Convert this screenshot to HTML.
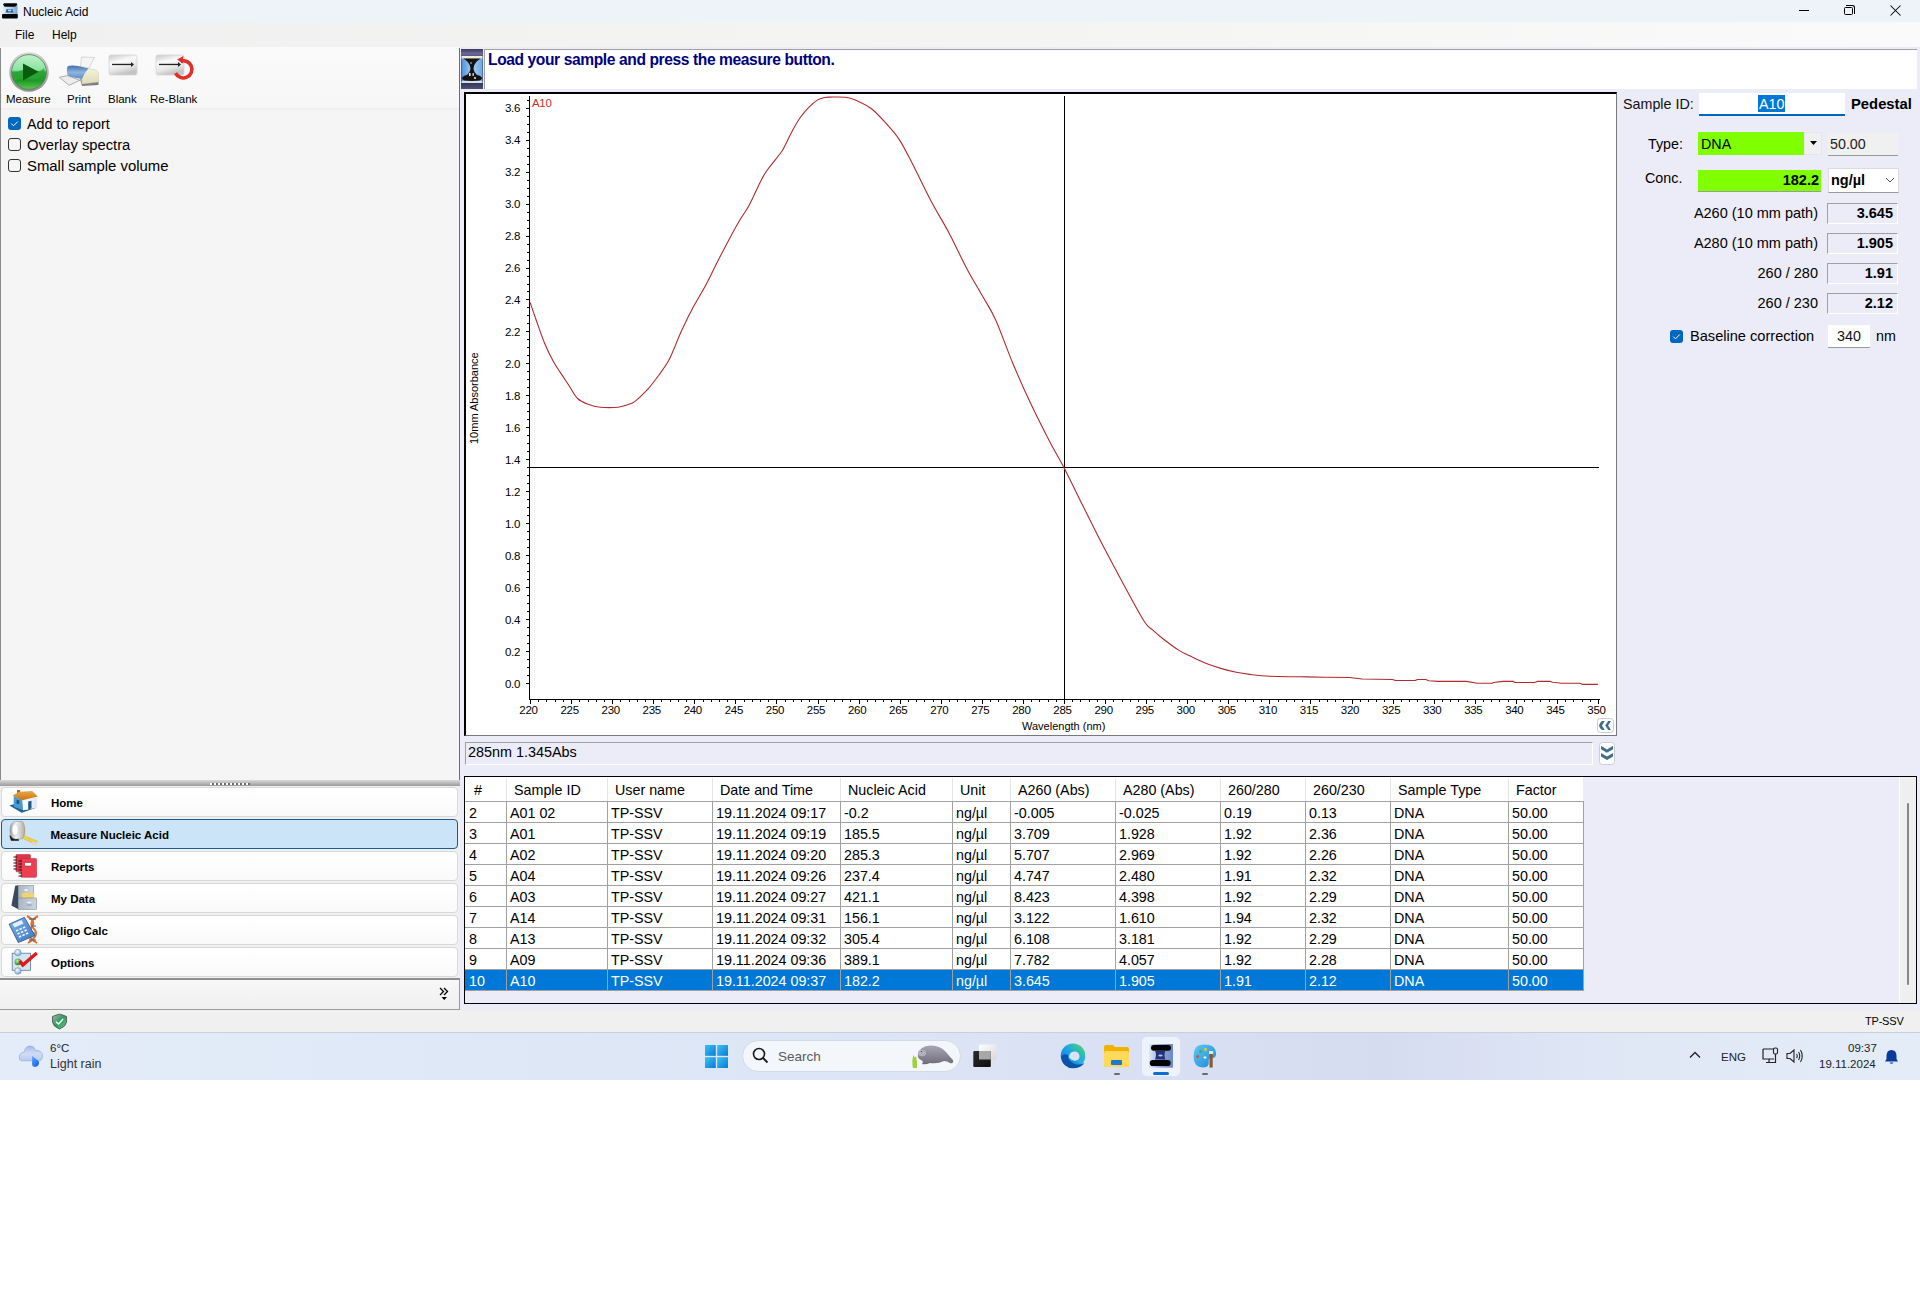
<!DOCTYPE html>
<html><head><meta charset="utf-8"><title>Nucleic Acid</title>
<style>
*{box-sizing:border-box}
html,body{margin:0;padding:0}
body{width:1920px;height:1312px;position:relative;overflow:hidden;background:#fff;font-family:"Liberation Sans",sans-serif;color:#000}
.a{position:absolute}
.t{position:absolute;white-space:nowrap;line-height:1}
.tl{position:absolute;font-size:11.5px;line-height:14px;color:#000;white-space:nowrap;letter-spacing:-0.3px}
.th{position:absolute;font-size:14.3px;line-height:16px;white-space:nowrap;color:#000}
.td{position:absolute;font-size:14.3px;line-height:16px;white-space:nowrap}
.nav{position:absolute;left:1px;width:457px;height:30px;border:1px solid #d9d9d9;border-radius:4px;background:linear-gradient(#fff,#fafafa)}
.nav .lbl{position:absolute;left:49px;top:8px;font-size:11.5px;font-weight:bold;line-height:14px;white-space:nowrap}
.nav svg{position:absolute;left:8px;top:1px}
.cb{position:absolute;width:13px;height:13px;border-radius:3px}
.cb.on{background:#0067c0}
.cb.off{border:1px solid #333;background:#f5f5f5}
.box{position:absolute;border-top:1px solid #a0a0a0;border-left:1px solid #a0a0a0;border-right:1px solid #fff;border-bottom:1px solid #fff;background:#ececf8}
.val{position:absolute;font-weight:bold;font-size:14.5px;line-height:16px;text-align:right;white-space:nowrap}
.lab{position:absolute;font-size:14.5px;line-height:16px;text-align:right;white-space:nowrap}
</style></head>
<body>
<!-- title bar -->
<div class="a" style="left:0;top:0;width:1920px;height:22px;background:#eef2f9"></div>
<svg class="a" style="left:0;top:0" width="24" height="22" viewBox="0 0 24 22">
  <defs><linearGradient id="ti" x1="0" y1="0" x2="1" y2="0"><stop offset="0" stop-color="#e4f2fc"/><stop offset="0.6" stop-color="#a9cdef"/><stop offset="1" stop-color="#7fa3c8"/></linearGradient></defs>
  <rect x="2.3" y="4.5" width="15.2" height="10.5" fill="url(#ti)"/>
  <path d="M3 4.6 Q3.5 3.2 5 3.2 L16.5 3.2 Q17.2 3.4 17 5 L15 6.8 L4.6 6.8 Z" fill="#050505"/>
  <path d="M5.2 12.5 L13.9 12.5 L12.6 11.3 L12.6 9.3 L6.3 9.3 L6.3 11.3 Z" fill="#1c4f88"/>
  <ellipse cx="9.6" cy="10.5" rx="2" ry="0.9" fill="#b8dcfa"/>
  <rect x="2" y="13.9" width="15.8" height="4.6" rx="1" fill="#050505"/>
</svg>
<div class="t" style="left:23px;top:6px;font-size:12px;color:#000">Nucleic Acid</div>
<!-- window controls -->
<div class="a" style="left:1799px;top:10px;width:10px;height:1px;background:#000"></div>
<div class="a" style="left:1844px;top:6.5px;width:8.5px;height:8.5px;border:1px solid #000;border-radius:1.5px"></div>
<div class="a" style="left:1846px;top:5px;width:8.5px;height:8.5px;border-top:1px solid #000;border-right:1px solid #000;border-radius:0 2.5px 0 0"></div>
<svg class="a" style="left:1890px;top:5px" width="11" height="11" viewBox="0 0 11 11"><path d="M0.5 0.5 L10.5 10.5 M10.5 0.5 L0.5 10.5" stroke="#000" stroke-width="1.05"/></svg>

<!-- menu bar -->
<div class="a" style="left:0;top:22px;width:1920px;height:25px;background:linear-gradient(90deg,#f0f0f0,#f4f4f3 50%,#fafafa)"></div>
<div class="t" style="left:15px;top:29px;font-size:12px">File</div>
<div class="t" style="left:52px;top:29px;font-size:12px">Help</div>

<!-- main area backgrounds -->
<div class="a" style="left:460px;top:47px;width:1460px;height:963px;background:#ececf8"></div>
<div class="a" style="left:0;top:47px;width:460px;height:963px;background:#f5f5f5"></div>
<!-- left toolbar -->
<div class="a" style="left:1px;top:47px;width:458px;height:62px;background:linear-gradient(#fafafa,#f7f7f7)"></div>
<div class="a" style="left:1px;top:108px;width:458px;height:2px;background:linear-gradient(#ececec,#f3f3f3)"></div>
<div class="a" style="left:0;top:48px;width:1px;height:732px;background:#8a8a8a"></div>
<div class="a" style="left:459px;top:48px;width:1px;height:732px;background:#6e6e6e"></div>

<!-- Measure icon -->
<svg class="a" style="left:8px;top:51px" width="42" height="42" viewBox="0 0 42 42">
  <defs>
    <linearGradient id="gm" x1="0" y1="0" x2="0" y2="1"><stop offset="0" stop-color="#bff2cc"/><stop offset="0.45" stop-color="#8be3a0"/><stop offset="0.5" stop-color="#2ea83a"/><stop offset="0.75" stop-color="#1d9a26"/><stop offset="1" stop-color="#62c455"/></linearGradient>
    <linearGradient id="gr" x1="0" y1="0" x2="0" y2="1"><stop offset="0" stop-color="#d6d6d6"/><stop offset="1" stop-color="#8e8e8e"/></linearGradient>
  </defs>
  <circle cx="21" cy="21" r="19.8" fill="url(#gr)"/>
  <circle cx="21" cy="21" r="17.4" fill="url(#gm)" stroke="#4f7f58" stroke-width="0.8"/>
  <path d="M6 24 Q12 17 21 20 Q30 23 36 17 L37 22 Q30 30 21 28 Q12 26 6 30 Z" fill="#2aa435" opacity="0.8"/>
  <polygon points="15,12.5 30.5,20.8 15,29.5" fill="#0a5a10"/>
</svg>
<div class="t" style="left:6px;top:94px;font-size:11.5px">Measure</div>
<!-- Print icon -->
<svg class="a" style="left:58px;top:56px" width="42" height="32" viewBox="0 0 42 32">
  <defs>
    <linearGradient id="pb" x1="0" y1="0" x2="0" y2="1"><stop offset="0" stop-color="#3f6ea8"/><stop offset="0.5" stop-color="#8fb4e0"/><stop offset="1" stop-color="#5d8cc4"/></linearGradient>
    <linearGradient id="pc" x1="0" y1="0" x2="0" y2="1"><stop offset="0" stop-color="#f6f3dc"/><stop offset="1" stop-color="#dedab8"/></linearGradient>
  </defs>
  <polygon points="23.5,1 36.5,1.5 31,12 22.5,10.5" fill="#f4f4f4" stroke="#c4c4c4" stroke-width="0.6"/>
  <polygon points="22,23 40.5,25 40.5,29 24,30" fill="#7d7d7d"/>
  <path d="M29 12.5 L38 14 Q41 16 40.5 20 L40.5 26 L24 28 L23.5 22.5 Z" fill="url(#pc)" stroke="#c9c5a3" stroke-width="0.5"/>
  <path d="M9.5 10.5 Q12 9 20 10 L30.5 12.5 Q27 16 24 23 L10 20.5 Q8 15 9.5 10.5 Z" fill="url(#pb)"/>
  <polygon points="1.4,21.3 9.5,19.6 22,24.3 11,29.3" fill="#ececec" stroke="#8f8f8f" stroke-width="0.7"/>
</svg>
<div class="t" style="left:67px;top:94px;font-size:11.5px">Print</div>
<!-- Blank icon -->
<svg class="a" style="left:108px;top:54px" width="30" height="23" viewBox="0 0 30 23">
  <defs><linearGradient id="gb" x1="0" y1="0" x2="0.35" y2="1"><stop offset="0" stop-color="#c8c8c8"/><stop offset="0.4" stop-color="#fafafa"/><stop offset="0.75" stop-color="#e6e6e6"/><stop offset="1" stop-color="#c4c4c4"/></linearGradient></defs>
  <rect x="1" y="1" width="28" height="20" rx="2" fill="url(#gb)" stroke="#d5d5d5" stroke-width="0.8"/>
  <rect x="4" y="9.8" width="20" height="1.3" fill="#222"/>
  <polygon points="23,8 26,10.45 23,12.9" fill="#222"/>
</svg>
<div class="t" style="left:108px;top:94px;font-size:11.5px">Blank</div>
<!-- Re-Blank icon -->
<svg class="a" style="left:155px;top:54px" width="42" height="32" viewBox="0 0 42 32">
  <rect x="1" y="1" width="28" height="20" rx="2" fill="url(#gb)" stroke="#d5d5d5" stroke-width="0.8"/>
  <rect x="4" y="9.8" width="20" height="1.3" fill="#222"/>
  <polygon points="23,8 26,10.45 23,12.9" fill="#222"/>
  <path d="M25.5 7.2 A8.6 8.6 0 1 1 20.6 19.1" fill="none" stroke="#e0302a" stroke-width="3.6"/>
  <polygon points="22.2,5.6 28.4,2 27.6,9.6" fill="#e0302a"/>
</svg>
<div class="t" style="left:150px;top:94px;font-size:11.5px">Re-Blank</div>

<!-- checkboxes -->
<div class="cb on" style="left:8px;top:117px"></div>
<svg class="a" style="left:8px;top:117px" width="13" height="13" viewBox="0 0 13 13"><path d="M3.3 6.6 L5.5 8.8 L9.8 4.5" fill="none" stroke="#fff" stroke-width="1"/></svg>
<div class="t" style="left:27px;top:117px;font-size:14.3px">Add to report</div>
<div class="cb off" style="left:8px;top:138px"></div>
<div class="t" style="left:27px;top:138px;font-size:14.75px">Overlay spectra</div>
<div class="cb off" style="left:8px;top:159px"></div>
<div class="t" style="left:27px;top:159px;font-size:14.9px">Small sample volume</div>

<!-- splitter -->
<div class="a" style="left:0;top:780px;width:460px;height:6px;background:linear-gradient(#dadada,#9a9a9a)"></div>
<div class="a" style="left:210px;top:782.5px;width:40px;height:2px;background:repeating-linear-gradient(90deg,#fff 0 2px,#6a6a6a 2px 4px)"></div>
<div class="a" style="left:0;top:786px;width:460px;height:224px;background:#f0f0f0"></div>

<!-- nav buttons -->
<div class="nav" style="top:787px"><div class="lbl">Home</div></div>
<div class="nav" style="top:819px;background:#cce4f7;border-color:#1d5b8d;border-width:1.5px"><div class="lbl" style="left:48.5px;top:7.5px">Measure Nucleic Acid</div></div>
<div class="nav" style="top:851px"><div class="lbl">Reports</div></div>
<div class="nav" style="top:883px"><div class="lbl">My Data</div></div>
<div class="nav" style="top:915px"><div class="lbl">Oligo Calc</div></div>
<div class="nav" style="top:947px"><div class="lbl">Options</div></div>
<svg class="a" style="left:0;top:785px" width="45" height="195" viewBox="0 785 45 195">
  <defs>
    <linearGradient id="roof" x1="0" y1="0" x2="0" y2="1"><stop offset="0" stop-color="#e9a84a"/><stop offset="1" stop-color="#c87414"/></linearGradient>
    <linearGradient id="wall" x1="0" y1="0" x2="1" y2="0"><stop offset="0" stop-color="#ffffff"/><stop offset="1" stop-color="#dfe8f0"/></linearGradient>
    <linearGradient id="ring" x1="0" y1="0" x2="1" y2="0"><stop offset="0" stop-color="#9a9a9a"/><stop offset="0.4" stop-color="#f4f4f4"/><stop offset="1" stop-color="#b0b0b0"/></linearGradient>
    <linearGradient id="cab" x1="0" y1="0" x2="1" y2="0"><stop offset="0" stop-color="#aab6c4"/><stop offset="1" stop-color="#cdd6e0"/></linearGradient>
    <linearGradient id="calc" x1="0" y1="0" x2="1" y2="1"><stop offset="0" stop-color="#7fb2e8"/><stop offset="1" stop-color="#3c78c4"/></linearGradient>
    <radialGradient id="ball" cx="40%" cy="35%" r="60%"><stop offset="0" stop-color="#ffffff"/><stop offset="1" stop-color="#7fb0d8"/></radialGradient>
    <radialGradient id="gball" cx="40%" cy="35%" r="60%"><stop offset="0" stop-color="#b8f0a8"/><stop offset="1" stop-color="#1f8f2a"/></radialGradient>
  </defs>
  <!-- home -->
  <polygon points="9.4,805.6 13.7,804.2 23.2,810.3 36.9,807.4 21.7,812.8" fill="#1f5f8a"/>
  <polygon points="13.7,795.9 22.4,799.8 23.2,810.3 13.7,806.7" fill="#4a9ad0"/>
  <polygon points="22.4,799.8 36.9,797 36.9,807.4 23.2,810.3" fill="url(#wall)"/>
  <rect x="16.6" y="800.2" width="2.6" height="3.6" fill="#1d4f78"/>
  <polygon points="28.2,801.5 31.5,800.8 31.5,808.6 28.2,809.3" fill="#1d5a86"/>
  <rect x="17" y="790" width="3.2" height="4" fill="#b86a1a"/>
  <polygon points="12.6,795.4 19.5,791.7 32.2,791 37.8,796.6 22.4,800.2" fill="url(#roof)"/>
  <!-- measure tape -->
  <polygon points="18.8,836.6 22,834.8 37.6,841.2 35,844.2" fill="#f0d048" stroke="#c9a82a" stroke-width="0.4"/>
  <polygon points="31.8,842 37.8,842.4 37.2,845.8 31.6,845" fill="#d8d8d8"/>
  <rect x="21" y="826" width="4.3" height="9.5" rx="1" fill="#f2c840"/>
  <polygon points="9.4,835.6 18,835.6 19,840.7 11,840.7" fill="#161616"/>
  <path d="M16 821.5 L22 821.5 Q24.5 822 24.5 830 Q24.5 838.5 21 839 L15 839 Q10 838.5 10 830.3 Q10 821.5 16 821.5 Z" fill="url(#ring)" stroke="#8a8a8a" stroke-width="0.5"/>
  <ellipse cx="15.2" cy="829.8" rx="3.1" ry="6" fill="#fdfdfd" stroke="#c8c8c8" stroke-width="0.6"/>
  <!-- reports -->
  <rect x="15.9" y="854.5" width="14.5" height="17.3" rx="1" fill="#e23446" stroke="#a8202e" stroke-width="0.5"/>
  <rect x="21" y="858.4" width="15.5" height="18.9" rx="1" fill="#ef3d52" stroke="#a8202e" stroke-width="0.5"/>
  <rect x="24.6" y="862.4" width="6.9" height="3.6" rx="0.8" fill="#fff" stroke="#7a1a24" stroke-width="0.5"/>
  <path d="M13.5 857 h3.5 M13.5 860 h3.5 M13.5 863 h3.5 M13.5 866 h3.5 M13.5 869 h3.5 M18.5 861 h3.5 M18.5 864 h3.5 M18.5 867 h3.5 M18.5 870 h3.5 M18.5 873 h3.5 M18.5 876 h3.5" stroke="#1a1a1a" stroke-width="1"/>
  <!-- my data -->
  <polygon points="11.4,905.5 15.2,885.7 18.3,885.3 18.3,909.3" fill="#3a4a5a"/>
  <rect x="18.3" y="885.3" width="15.2" height="13" fill="url(#cab)" stroke="#6d7a88" stroke-width="0.5"/>
  <rect x="24.4" y="889.3" width="3.4" height="1.6" fill="#f4f6f8"/>
  <polygon points="22.1,893.3 26,892.5 34.3,893.5 34.3,898 22.1,898" fill="#f2d46a"/>
  <rect x="18.3" y="898" width="18.3" height="11.3" fill="url(#cab)" stroke="#6d7a88" stroke-width="0.5"/>
  <rect x="27.4" y="901.8" width="3.8" height="1.4" fill="#f4f6f8"/>
  <rect x="27" y="904.5" width="4.6" height="1" fill="#8a96a4"/>
  <!-- oligo calc -->
  <path d="M27 916 Q38 922 30 929 Q24 935 37 943 M38 916 Q27 922 34 929 Q40 935 28 943" fill="none" stroke="#e8702a" stroke-width="2"/>
  <path d="M29 919 h7 M31 926 h5 M30 933 h5 M29 940 h7" stroke="#2a5d99" stroke-width="1.2"/>
  <polygon points="9.1,924.2 24.4,917.3 35,935.6 18.3,942.5" fill="url(#calc)" stroke="#24528e" stroke-width="0.8"/>
  <polygon points="12.5,924 21.5,920 23.5,923.5 14.5,927.5" fill="#e6f0fa"/>
  <path d="M16 931 l2.2 -1 M19.5 929.5 l2.2 -1 M23 928 l2.2 -1 M17.5 934 l2.2 -1 M21 932.5 l2.2 -1 M24.5 931 l2.2 -1 M19 937 l2.2 -1 M22.5 935.5 l2.2 -1 M26 934 l2.2 -1" stroke="#f4f8fc" stroke-width="1.5"/>
  <!-- options -->
  <rect x="12.2" y="953.2" width="18.3" height="17.1" fill="#d4e4f2" stroke="#5a7a9a" stroke-width="0.8"/>
  <circle cx="17.9" cy="952.6" r="3.3" fill="url(#ball)" stroke="#6a8aa8" stroke-width="0.5"/>
  <circle cx="17.9" cy="961.9" r="3.3" fill="url(#gball)"/>
  <circle cx="17.9" cy="971" r="3.3" fill="url(#ball)" stroke="#6a8aa8" stroke-width="0.5"/>
  <path d="M19.8 961 L22.8 965 L36.8 953" fill="none" stroke="#e01818" stroke-width="3.4" stroke-linejoin="miter"/>
</svg>
<!-- bottom nav bar -->
<div class="a" style="left:0;top:978px;width:460px;height:32px;background:linear-gradient(#f8f8f8,#efefef);border-top:2px solid #8f8f8f;border-right:1px solid #9a9a9a;border-bottom:1px solid #9a9a9a"></div>
<svg class="a" style="left:439px;top:987px" width="11" height="15" viewBox="0 0 11 15"><path d="M1 1 L4.5 4.5 L1 8 M5 1 L8.5 4.5 L5 8" fill="none" stroke="#000" stroke-width="1.3"/><polygon points="2.5,10 8,10 5.25,13" fill="#000"/></svg>

<!-- right header -->
<svg class="a" style="left:461px;top:49px" width="22" height="40" viewBox="0 0 22 40">
  <defs>
    <linearGradient id="hb" x1="0" y1="0" x2="0" y2="1"><stop offset="0" stop-color="#3a3a5e"/><stop offset="0.12" stop-color="#6b6a9a"/><stop offset="0.2" stop-color="#4a4a70"/><stop offset="0.8" stop-color="#2c2c48"/><stop offset="1" stop-color="#50507a"/></linearGradient>
    <linearGradient id="hs" x1="0" y1="0" x2="1" y2="0"><stop offset="0" stop-color="#4f8fd8"/><stop offset="0.5" stop-color="#a8d0f4"/><stop offset="1" stop-color="#6aa8e6"/></linearGradient>
  </defs>
  <rect x="0" y="0" width="22" height="40" fill="url(#hb)"/>
  <rect x="0.5" y="9" width="21" height="23" fill="url(#hs)"/>
  <rect x="0.5" y="7" width="21" height="2.6" fill="#efe9d6"/>
  <path d="M2 9.6 L20 9.6 Q15 12 13 17 L12.5 20 L13.5 23 Q15 25 16 26 Q21 27 21 29.5 Q21 32 11 32 Q1 32 1 29.5 Q1 27 6 26 Q7 25 8.5 23 L9.5 20 L9 17 Q7 12 2 9.6 Z" fill="#141210"/>
  <rect x="8" y="24" width="1.6" height="3" fill="#e8e8e8"/><rect x="11.5" y="24" width="1.4" height="3" fill="#cfcfcf"/>
  <circle cx="14" cy="29" r="1" fill="#f4f0e0"/><circle cx="10" cy="14" r="0.8" fill="#e0e0e0"/>
  <rect x="0.5" y="32" width="21" height="2" fill="#d8dde6"/>
</svg>
<div class="a" style="left:484px;top:49px;width:1433px;height:40px;background:#fff;border-top:1px solid #a0a0a0;border-left:1px solid #a0a0a0"></div>
<div class="t" style="left:488px;top:51.5px;font-size:15.6px;letter-spacing:-0.4px;font-weight:bold;color:#000080">Load your sample and press the measure button.</div>

<!-- chart box -->
<div class="a" style="left:464px;top:92px;width:1153px;height:644px;background:#fff;border-top:2px solid #000;border-left:2px solid #000;border-right:1px solid #76787e;border-bottom:1px solid #76787e"></div>
<svg width="1153" height="645" viewBox="464 92 1153 645" style="position:absolute;left:464px;top:92px" shape-rendering="crispEdges">
<rect x="529" y="96" width="1" height="604" fill="#000"/>
<rect x="529" y="699" width="1071" height="1" fill="#000"/>
<rect x="526" y="683" width="3" height="1" fill="#000"/>
<rect x="527" y="675" width="2" height="1" fill="#000"/>
<rect x="527" y="667" width="2" height="1" fill="#000"/>
<rect x="527" y="659" width="2" height="1" fill="#000"/>
<rect x="526" y="651" width="3" height="1" fill="#000"/>
<rect x="527" y="643" width="2" height="1" fill="#000"/>
<rect x="527" y="635" width="2" height="1" fill="#000"/>
<rect x="527" y="627" width="2" height="1" fill="#000"/>
<rect x="526" y="619" width="3" height="1" fill="#000"/>
<rect x="527" y="611" width="2" height="1" fill="#000"/>
<rect x="527" y="603" width="2" height="1" fill="#000"/>
<rect x="527" y="595" width="2" height="1" fill="#000"/>
<rect x="526" y="587" width="3" height="1" fill="#000"/>
<rect x="527" y="579" width="2" height="1" fill="#000"/>
<rect x="527" y="571" width="2" height="1" fill="#000"/>
<rect x="527" y="563" width="2" height="1" fill="#000"/>
<rect x="526" y="555" width="3" height="1" fill="#000"/>
<rect x="527" y="547" width="2" height="1" fill="#000"/>
<rect x="527" y="539" width="2" height="1" fill="#000"/>
<rect x="527" y="531" width="2" height="1" fill="#000"/>
<rect x="526" y="523" width="3" height="1" fill="#000"/>
<rect x="527" y="515" width="2" height="1" fill="#000"/>
<rect x="527" y="507" width="2" height="1" fill="#000"/>
<rect x="527" y="499" width="2" height="1" fill="#000"/>
<rect x="526" y="491" width="3" height="1" fill="#000"/>
<rect x="527" y="483" width="2" height="1" fill="#000"/>
<rect x="527" y="475" width="2" height="1" fill="#000"/>
<rect x="527" y="467" width="2" height="1" fill="#000"/>
<rect x="526" y="459" width="3" height="1" fill="#000"/>
<rect x="527" y="451" width="2" height="1" fill="#000"/>
<rect x="527" y="443" width="2" height="1" fill="#000"/>
<rect x="527" y="435" width="2" height="1" fill="#000"/>
<rect x="526" y="427" width="3" height="1" fill="#000"/>
<rect x="527" y="419" width="2" height="1" fill="#000"/>
<rect x="527" y="411" width="2" height="1" fill="#000"/>
<rect x="527" y="403" width="2" height="1" fill="#000"/>
<rect x="526" y="395" width="3" height="1" fill="#000"/>
<rect x="527" y="387" width="2" height="1" fill="#000"/>
<rect x="527" y="379" width="2" height="1" fill="#000"/>
<rect x="527" y="371" width="2" height="1" fill="#000"/>
<rect x="526" y="363" width="3" height="1" fill="#000"/>
<rect x="527" y="355" width="2" height="1" fill="#000"/>
<rect x="527" y="347" width="2" height="1" fill="#000"/>
<rect x="527" y="339" width="2" height="1" fill="#000"/>
<rect x="526" y="331" width="3" height="1" fill="#000"/>
<rect x="527" y="323" width="2" height="1" fill="#000"/>
<rect x="527" y="315" width="2" height="1" fill="#000"/>
<rect x="527" y="307" width="2" height="1" fill="#000"/>
<rect x="526" y="299" width="3" height="1" fill="#000"/>
<rect x="527" y="291" width="2" height="1" fill="#000"/>
<rect x="527" y="284" width="2" height="1" fill="#000"/>
<rect x="527" y="276" width="2" height="1" fill="#000"/>
<rect x="526" y="268" width="3" height="1" fill="#000"/>
<rect x="527" y="260" width="2" height="1" fill="#000"/>
<rect x="527" y="252" width="2" height="1" fill="#000"/>
<rect x="527" y="244" width="2" height="1" fill="#000"/>
<rect x="526" y="236" width="3" height="1" fill="#000"/>
<rect x="527" y="228" width="2" height="1" fill="#000"/>
<rect x="527" y="220" width="2" height="1" fill="#000"/>
<rect x="527" y="212" width="2" height="1" fill="#000"/>
<rect x="526" y="204" width="3" height="1" fill="#000"/>
<rect x="527" y="196" width="2" height="1" fill="#000"/>
<rect x="527" y="188" width="2" height="1" fill="#000"/>
<rect x="527" y="180" width="2" height="1" fill="#000"/>
<rect x="526" y="172" width="3" height="1" fill="#000"/>
<rect x="527" y="164" width="2" height="1" fill="#000"/>
<rect x="527" y="156" width="2" height="1" fill="#000"/>
<rect x="527" y="148" width="2" height="1" fill="#000"/>
<rect x="526" y="140" width="3" height="1" fill="#000"/>
<rect x="527" y="132" width="2" height="1" fill="#000"/>
<rect x="527" y="124" width="2" height="1" fill="#000"/>
<rect x="527" y="116" width="2" height="1" fill="#000"/>
<rect x="526" y="108" width="3" height="1" fill="#000"/>
<rect x="527" y="100" width="2" height="1" fill="#000"/>
<rect x="530" y="700" width="1" height="4" fill="#000"/>
<rect x="538" y="700" width="1" height="2" fill="#000"/>
<rect x="546" y="700" width="1" height="2" fill="#000"/>
<rect x="555" y="700" width="1" height="2" fill="#000"/>
<rect x="563" y="700" width="1" height="2" fill="#000"/>
<rect x="571" y="700" width="1" height="4" fill="#000"/>
<rect x="579" y="700" width="1" height="2" fill="#000"/>
<rect x="588" y="700" width="1" height="2" fill="#000"/>
<rect x="596" y="700" width="1" height="2" fill="#000"/>
<rect x="604" y="700" width="1" height="2" fill="#000"/>
<rect x="612" y="700" width="1" height="4" fill="#000"/>
<rect x="620" y="700" width="1" height="2" fill="#000"/>
<rect x="629" y="700" width="1" height="2" fill="#000"/>
<rect x="637" y="700" width="1" height="2" fill="#000"/>
<rect x="645" y="700" width="1" height="2" fill="#000"/>
<rect x="653" y="700" width="1" height="4" fill="#000"/>
<rect x="661" y="700" width="1" height="2" fill="#000"/>
<rect x="670" y="700" width="1" height="2" fill="#000"/>
<rect x="678" y="700" width="1" height="2" fill="#000"/>
<rect x="686" y="700" width="1" height="2" fill="#000"/>
<rect x="694" y="700" width="1" height="4" fill="#000"/>
<rect x="703" y="700" width="1" height="2" fill="#000"/>
<rect x="711" y="700" width="1" height="2" fill="#000"/>
<rect x="719" y="700" width="1" height="2" fill="#000"/>
<rect x="727" y="700" width="1" height="2" fill="#000"/>
<rect x="735" y="700" width="1" height="4" fill="#000"/>
<rect x="744" y="700" width="1" height="2" fill="#000"/>
<rect x="752" y="700" width="1" height="2" fill="#000"/>
<rect x="760" y="700" width="1" height="2" fill="#000"/>
<rect x="768" y="700" width="1" height="2" fill="#000"/>
<rect x="776" y="700" width="1" height="4" fill="#000"/>
<rect x="785" y="700" width="1" height="2" fill="#000"/>
<rect x="793" y="700" width="1" height="2" fill="#000"/>
<rect x="801" y="700" width="1" height="2" fill="#000"/>
<rect x="809" y="700" width="1" height="2" fill="#000"/>
<rect x="818" y="700" width="1" height="4" fill="#000"/>
<rect x="826" y="700" width="1" height="2" fill="#000"/>
<rect x="834" y="700" width="1" height="2" fill="#000"/>
<rect x="842" y="700" width="1" height="2" fill="#000"/>
<rect x="850" y="700" width="1" height="2" fill="#000"/>
<rect x="859" y="700" width="1" height="4" fill="#000"/>
<rect x="867" y="700" width="1" height="2" fill="#000"/>
<rect x="875" y="700" width="1" height="2" fill="#000"/>
<rect x="883" y="700" width="1" height="2" fill="#000"/>
<rect x="891" y="700" width="1" height="2" fill="#000"/>
<rect x="900" y="700" width="1" height="4" fill="#000"/>
<rect x="908" y="700" width="1" height="2" fill="#000"/>
<rect x="916" y="700" width="1" height="2" fill="#000"/>
<rect x="924" y="700" width="1" height="2" fill="#000"/>
<rect x="933" y="700" width="1" height="2" fill="#000"/>
<rect x="941" y="700" width="1" height="4" fill="#000"/>
<rect x="949" y="700" width="1" height="2" fill="#000"/>
<rect x="957" y="700" width="1" height="2" fill="#000"/>
<rect x="965" y="700" width="1" height="2" fill="#000"/>
<rect x="974" y="700" width="1" height="2" fill="#000"/>
<rect x="982" y="700" width="1" height="4" fill="#000"/>
<rect x="990" y="700" width="1" height="2" fill="#000"/>
<rect x="998" y="700" width="1" height="2" fill="#000"/>
<rect x="1006" y="700" width="1" height="2" fill="#000"/>
<rect x="1015" y="700" width="1" height="2" fill="#000"/>
<rect x="1023" y="700" width="1" height="4" fill="#000"/>
<rect x="1031" y="700" width="1" height="2" fill="#000"/>
<rect x="1039" y="700" width="1" height="2" fill="#000"/>
<rect x="1048" y="700" width="1" height="2" fill="#000"/>
<rect x="1056" y="700" width="1" height="2" fill="#000"/>
<rect x="1064" y="700" width="1" height="4" fill="#000"/>
<rect x="1072" y="700" width="1" height="2" fill="#000"/>
<rect x="1080" y="700" width="1" height="2" fill="#000"/>
<rect x="1089" y="700" width="1" height="2" fill="#000"/>
<rect x="1097" y="700" width="1" height="2" fill="#000"/>
<rect x="1105" y="700" width="1" height="4" fill="#000"/>
<rect x="1113" y="700" width="1" height="2" fill="#000"/>
<rect x="1122" y="700" width="1" height="2" fill="#000"/>
<rect x="1130" y="700" width="1" height="2" fill="#000"/>
<rect x="1138" y="700" width="1" height="2" fill="#000"/>
<rect x="1146" y="700" width="1" height="4" fill="#000"/>
<rect x="1154" y="700" width="1" height="2" fill="#000"/>
<rect x="1163" y="700" width="1" height="2" fill="#000"/>
<rect x="1171" y="700" width="1" height="2" fill="#000"/>
<rect x="1179" y="700" width="1" height="2" fill="#000"/>
<rect x="1187" y="700" width="1" height="4" fill="#000"/>
<rect x="1195" y="700" width="1" height="2" fill="#000"/>
<rect x="1204" y="700" width="1" height="2" fill="#000"/>
<rect x="1212" y="700" width="1" height="2" fill="#000"/>
<rect x="1220" y="700" width="1" height="2" fill="#000"/>
<rect x="1228" y="700" width="1" height="4" fill="#000"/>
<rect x="1237" y="700" width="1" height="2" fill="#000"/>
<rect x="1245" y="700" width="1" height="2" fill="#000"/>
<rect x="1253" y="700" width="1" height="2" fill="#000"/>
<rect x="1261" y="700" width="1" height="2" fill="#000"/>
<rect x="1269" y="700" width="1" height="4" fill="#000"/>
<rect x="1278" y="700" width="1" height="2" fill="#000"/>
<rect x="1286" y="700" width="1" height="2" fill="#000"/>
<rect x="1294" y="700" width="1" height="2" fill="#000"/>
<rect x="1302" y="700" width="1" height="2" fill="#000"/>
<rect x="1310" y="700" width="1" height="4" fill="#000"/>
<rect x="1319" y="700" width="1" height="2" fill="#000"/>
<rect x="1327" y="700" width="1" height="2" fill="#000"/>
<rect x="1335" y="700" width="1" height="2" fill="#000"/>
<rect x="1343" y="700" width="1" height="2" fill="#000"/>
<rect x="1352" y="700" width="1" height="4" fill="#000"/>
<rect x="1360" y="700" width="1" height="2" fill="#000"/>
<rect x="1368" y="700" width="1" height="2" fill="#000"/>
<rect x="1376" y="700" width="1" height="2" fill="#000"/>
<rect x="1384" y="700" width="1" height="2" fill="#000"/>
<rect x="1393" y="700" width="1" height="4" fill="#000"/>
<rect x="1401" y="700" width="1" height="2" fill="#000"/>
<rect x="1409" y="700" width="1" height="2" fill="#000"/>
<rect x="1417" y="700" width="1" height="2" fill="#000"/>
<rect x="1425" y="700" width="1" height="2" fill="#000"/>
<rect x="1434" y="700" width="1" height="4" fill="#000"/>
<rect x="1442" y="700" width="1" height="2" fill="#000"/>
<rect x="1450" y="700" width="1" height="2" fill="#000"/>
<rect x="1458" y="700" width="1" height="2" fill="#000"/>
<rect x="1467" y="700" width="1" height="2" fill="#000"/>
<rect x="1475" y="700" width="1" height="4" fill="#000"/>
<rect x="1483" y="700" width="1" height="2" fill="#000"/>
<rect x="1491" y="700" width="1" height="2" fill="#000"/>
<rect x="1499" y="700" width="1" height="2" fill="#000"/>
<rect x="1508" y="700" width="1" height="2" fill="#000"/>
<rect x="1516" y="700" width="1" height="4" fill="#000"/>
<rect x="1524" y="700" width="1" height="2" fill="#000"/>
<rect x="1532" y="700" width="1" height="2" fill="#000"/>
<rect x="1540" y="700" width="1" height="2" fill="#000"/>
<rect x="1549" y="700" width="1" height="2" fill="#000"/>
<rect x="1557" y="700" width="1" height="4" fill="#000"/>
<rect x="1565" y="700" width="1" height="2" fill="#000"/>
<rect x="1573" y="700" width="1" height="2" fill="#000"/>
<rect x="1582" y="700" width="1" height="2" fill="#000"/>
<rect x="1590" y="700" width="1" height="2" fill="#000"/>
<rect x="1598" y="700" width="1" height="4" fill="#000"/>
</svg>
<svg width="1153" height="645" viewBox="464 92 1153 645" style="position:absolute;left:464px;top:92px">
<rect x="1064" y="96" width="1" height="603" fill="#000"/>
<rect x="530" y="467" width="1069" height="1" fill="#000"/>
<path d="M530.10 302.40 C531.08 305.25 533.60 312.73 536.00 319.50 C538.40 326.27 541.65 336.07 544.50 343.00 C547.35 349.93 550.42 356.12 553.10 361.10 C555.78 366.08 557.93 368.80 560.60 372.90 C563.27 377.00 566.27 381.43 569.10 385.70 C571.93 389.97 574.40 395.40 577.60 398.50 C580.80 401.60 584.55 402.85 588.30 404.30 C592.05 405.75 595.12 406.72 600.10 407.20 C605.08 407.68 613.40 407.68 618.20 407.20 C623.00 406.72 626.05 405.32 628.90 404.30 C631.75 403.28 632.10 403.67 635.30 401.10 C638.50 398.53 644.02 393.43 648.10 388.90 C652.18 384.37 656.42 378.53 659.80 373.90 C663.18 369.27 666.03 365.30 668.40 361.10 C670.77 356.90 671.75 353.90 674.00 348.70 C676.25 343.50 678.60 337.00 681.90 329.90 C685.20 322.80 689.83 313.53 693.80 306.10 C697.77 298.67 701.73 292.73 705.70 285.30 C709.67 277.87 713.63 269.27 717.60 261.50 C721.57 253.73 725.87 245.48 729.50 238.70 C733.13 231.92 736.10 226.42 739.40 220.80 C742.70 215.18 745.83 211.43 749.30 205.00 C752.77 198.57 757.23 187.98 760.20 182.20 C763.17 176.42 763.63 175.25 767.10 170.30 C770.57 165.35 778.02 156.63 781.00 152.50 C783.98 148.37 783.02 149.30 785.00 145.50 C786.98 141.70 790.27 134.48 792.90 129.70 C795.53 124.92 798.15 120.52 800.80 116.80 C803.45 113.08 805.98 110.22 808.80 107.40 C811.62 104.58 815.07 101.55 817.70 99.90 C820.33 98.25 822.55 97.97 824.60 97.50 C826.65 97.03 826.30 97.10 830.00 97.10 C833.70 97.10 841.85 96.70 846.80 97.50 C851.75 98.30 855.58 100.02 859.70 101.90 C863.82 103.78 867.22 105.33 871.50 108.80 C875.78 112.27 880.77 117.57 885.40 122.70 C890.03 127.83 894.67 132.50 899.30 139.60 C903.93 146.70 907.92 155.07 913.20 165.30 C918.48 175.53 925.05 189.77 931.00 201.00 C936.95 212.23 942.95 221.47 948.90 232.70 C954.85 243.93 961.08 257.82 966.70 268.40 C972.32 278.98 977.77 287.60 982.60 296.20 C987.43 304.80 990.65 308.78 995.70 320.00 C1000.75 331.22 1006.98 349.40 1012.90 363.50 C1018.82 377.60 1025.10 391.65 1031.20 404.60 C1037.30 417.55 1043.98 430.60 1049.50 441.20 C1055.02 451.80 1058.97 457.90 1064.30 468.20 C1069.63 478.50 1075.58 491.10 1081.50 503.00 C1087.42 514.90 1093.32 527.02 1099.80 539.60 C1106.28 552.18 1113.12 565.07 1120.40 578.50 C1127.68 591.93 1138.08 611.60 1143.50 620.20 C1148.92 628.80 1149.60 626.97 1152.90 630.10 C1156.20 633.23 1158.95 635.62 1163.30 639.00 C1167.65 642.38 1174.48 647.55 1179.00 650.40 C1183.52 653.25 1186.07 654.02 1190.40 656.10 C1194.73 658.18 1199.78 660.82 1205.00 662.90 C1210.22 664.98 1216.48 667.03 1221.70 668.60 C1226.92 670.17 1231.62 671.33 1236.30 672.30 C1240.98 673.27 1244.25 673.73 1249.80 674.40 C1255.35 675.07 1261.23 675.90 1269.60 676.30 C1277.97 676.70 1290.85 676.65 1300.00 676.80 C1309.15 676.95 1320.42 677.13 1324.50 677.20 L1349.50 677.50 L1362.30 679.00 L1392.50 679.50 L1395.50 680.50 L1415.20 680.50 L1417.40 679.50 L1425.70 679.50 L1428.80 680.70 L1437.80 681.40 L1466.50 681.40 L1477.10 683.20 L1492.20 683.20 L1493.70 682.50 L1502.80 681.40 L1513.40 681.40 L1514.90 682.50 L1534.50 682.50 L1537.50 681.40 L1550.40 681.40 L1552.60 682.30 L1561.70 683.20 L1579.80 683.20 L1582.80 684.40 L1597.90 684.40 " fill="none" stroke="#b02a2e" stroke-width="1.1" stroke-linejoin="round"/>
</svg>
<div class="tl" style="left:490px;width:30px;text-align:right;top:676.5px">0.0</div>
<div class="tl" style="left:490px;width:30px;text-align:right;top:644.5px">0.2</div>
<div class="tl" style="left:490px;width:30px;text-align:right;top:612.6px">0.4</div>
<div class="tl" style="left:490px;width:30px;text-align:right;top:580.6px">0.6</div>
<div class="tl" style="left:490px;width:30px;text-align:right;top:548.7px">0.8</div>
<div class="tl" style="left:490px;width:30px;text-align:right;top:516.7px">1.0</div>
<div class="tl" style="left:490px;width:30px;text-align:right;top:484.7px">1.2</div>
<div class="tl" style="left:490px;width:30px;text-align:right;top:452.8px">1.4</div>
<div class="tl" style="left:490px;width:30px;text-align:right;top:420.8px">1.6</div>
<div class="tl" style="left:490px;width:30px;text-align:right;top:388.9px">1.8</div>
<div class="tl" style="left:490px;width:30px;text-align:right;top:356.9px">2.0</div>
<div class="tl" style="left:490px;width:30px;text-align:right;top:324.9px">2.2</div>
<div class="tl" style="left:490px;width:30px;text-align:right;top:293.0px">2.4</div>
<div class="tl" style="left:490px;width:30px;text-align:right;top:261.0px">2.6</div>
<div class="tl" style="left:490px;width:30px;text-align:right;top:229.1px">2.8</div>
<div class="tl" style="left:490px;width:30px;text-align:right;top:197.1px">3.0</div>
<div class="tl" style="left:490px;width:30px;text-align:right;top:165.1px">3.2</div>
<div class="tl" style="left:490px;width:30px;text-align:right;top:133.2px">3.4</div>
<div class="tl" style="left:490px;width:30px;text-align:right;top:101.2px">3.6</div>
<div class="tl" style="left:513.5px;width:30px;text-align:center;top:703px">220</div>
<div class="tl" style="left:554.6px;width:30px;text-align:center;top:703px">225</div>
<div class="tl" style="left:595.7px;width:30px;text-align:center;top:703px">230</div>
<div class="tl" style="left:636.7px;width:30px;text-align:center;top:703px">235</div>
<div class="tl" style="left:677.8px;width:30px;text-align:center;top:703px">240</div>
<div class="tl" style="left:718.9px;width:30px;text-align:center;top:703px">245</div>
<div class="tl" style="left:760.0px;width:30px;text-align:center;top:703px">250</div>
<div class="tl" style="left:801.0px;width:30px;text-align:center;top:703px">255</div>
<div class="tl" style="left:842.1px;width:30px;text-align:center;top:703px">260</div>
<div class="tl" style="left:883.2px;width:30px;text-align:center;top:703px">265</div>
<div class="tl" style="left:924.3px;width:30px;text-align:center;top:703px">270</div>
<div class="tl" style="left:965.3px;width:30px;text-align:center;top:703px">275</div>
<div class="tl" style="left:1006.4px;width:30px;text-align:center;top:703px">280</div>
<div class="tl" style="left:1047.5px;width:30px;text-align:center;top:703px">285</div>
<div class="tl" style="left:1088.6px;width:30px;text-align:center;top:703px">290</div>
<div class="tl" style="left:1129.7px;width:30px;text-align:center;top:703px">295</div>
<div class="tl" style="left:1170.7px;width:30px;text-align:center;top:703px">300</div>
<div class="tl" style="left:1211.8px;width:30px;text-align:center;top:703px">305</div>
<div class="tl" style="left:1252.9px;width:30px;text-align:center;top:703px">310</div>
<div class="tl" style="left:1294.0px;width:30px;text-align:center;top:703px">315</div>
<div class="tl" style="left:1335.0px;width:30px;text-align:center;top:703px">320</div>
<div class="tl" style="left:1376.1px;width:30px;text-align:center;top:703px">325</div>
<div class="tl" style="left:1417.2px;width:30px;text-align:center;top:703px">330</div>
<div class="tl" style="left:1458.3px;width:30px;text-align:center;top:703px">335</div>
<div class="tl" style="left:1499.3px;width:30px;text-align:center;top:703px">340</div>
<div class="tl" style="left:1540.4px;width:30px;text-align:center;top:703px">345</div>
<div class="tl" style="left:1581.5px;width:30px;text-align:center;top:703px">350</div>
<div class="t" style="left:532px;top:97.5px;font-size:11.5px;color:#c8302f;letter-spacing:-0.3px">A10</div>
<div class="t" style="left:1022px;top:721px;font-size:11px;color:#000">Wavelength (nm)</div>
<div class="t" style="left:429px;top:392px;width:92px;font-size:11px;color:#000;transform:rotate(-90deg);transform-origin:46px 6px">10mm Absorbance</div>
<!-- « button -->
<div class="a" style="left:1596.5px;top:718px;width:17px;height:15px;border:1px solid #c9cdd4;border-radius:3.5px;background:#fff"></div>
<svg class="a" style="left:1596px;top:718px" width="18" height="16" viewBox="1596 718 18 16">
  <path d="M1604.8 721 L1601.9 725.4 L1604.8 729.9 L1602 729.9 Q1599 727.2 1599 725.4 Q1599 723.6 1602 721 Z" fill="#3f6d88"/>
  <path d="M1611 721 L1608.1 725.4 L1611 729.9 L1608.2 729.9 L1605.2 725.4 L1608.2 721 Z" fill="#3f6d88"/>
</svg>
<!-- cursor box -->
<div class="a" style="left:465px;top:742px;width:1128px;height:23px;background:#ececf8;border-top:1px solid #a0a0a0;border-left:1px solid #a0a0a0;border-right:1px solid #fff;border-bottom:1px solid #fff"></div>
<div class="t" style="left:468px;top:745px;font-size:14.4px">285nm 1.345Abs</div>
<!-- down chevrons button -->
<div class="a" style="left:1598.5px;top:741.5px;width:16px;height:23px;border:1px solid #c9cdd4;border-radius:3.5px;background:#fff"></div>
<svg class="a" style="left:1598px;top:741px" width="18" height="24" viewBox="1598 741 18 24">
  <path d="M1601 745.8 L1607 749.4 L1613 745.8 L1613 749.2 L1607 752.7 L1601 749.2 Z" fill="#3f6d88"/>
  <path d="M1601 753 L1607 756.6 L1613 753 L1613 756.4 L1607 759.9 L1601 756.4 Z" fill="#3f6d88"/>
</svg>
<!-- right panel -->
<div class="t" style="left:1623px;top:97px;font-size:14.3px;color:#111">Sample ID:</div>
<div class="a" style="left:1699px;top:93px;width:146px;height:23px;background:#fff;border-bottom:2px solid #0067c0"></div>
<div class="a" style="left:1758px;top:95px;width:27px;height:17px;background:#0078d7"></div>
<div class="t" style="left:1759px;top:97px;font-size:14.3px;color:#fff">A10</div>
<div class="t" style="left:1851px;top:97px;font-size:14.8px;font-weight:bold">Pedestal</div>

<div class="t" style="left:1648px;top:137px;font-size:14.3px">Type:</div>
<div class="a" style="left:1698px;top:132px;width:106px;height:23px;background:#80ff00"></div>
<div class="a" style="left:1804px;top:132px;width:18px;height:23px;background:#f0f0f0;border:1px solid #e6e6e6"></div>
<svg class="a" style="left:1810px;top:141px" width="7" height="4" viewBox="0 0 7 4"><polygon points="0,0 7,0 3.5,4" fill="#000"/></svg>
<div class="t" style="left:1701px;top:137px;font-size:14.3px">DNA</div>
<div class="a" style="left:1828px;top:133px;width:70px;height:23px;background:#f0f0f0;border-bottom:1px solid #9a9a9a"></div>
<div class="t" style="left:1830px;top:137px;font-size:14.3px;color:#222">50.00</div>

<div class="t" style="left:1645px;top:171px;font-size:14.3px">Conc.</div>
<div class="a" style="left:1698px;top:170px;width:123px;height:22px;background:#80ff00;border-bottom:1px solid #9a9a9a"></div>
<div class="val" style="left:1698px;top:172px;width:121px;">182.2</div>
<div class="a" style="left:1828px;top:168px;width:71px;height:25px;background:#fff;border:1px solid #dcdcdc;border-bottom-color:#9a9a9a"></div>
<div class="t" style="left:1831px;top:173px;font-size:14.5px;font-weight:bold">ng/µl</div>
<svg class="a" style="left:1885px;top:177px" width="10" height="6" viewBox="0 0 10 6"><path d="M1 1 L5 5 L9 1" fill="none" stroke="#555" stroke-width="1"/></svg>

<div class="lab" style="left:1640px;top:205px;width:178px">A260 (10 mm path)</div>
<div class="box" style="left:1827px;top:203px;width:71px;height:21px"></div>
<div class="val" style="left:1827px;top:205px;width:66px">3.645</div>
<div class="lab" style="left:1640px;top:235px;width:178px">A280 (10 mm path)</div>
<div class="box" style="left:1827px;top:233px;width:71px;height:21px"></div>
<div class="val" style="left:1827px;top:235px;width:66px">1.905</div>
<div class="lab" style="left:1640px;top:265px;width:178px">260 / 280</div>
<div class="box" style="left:1827px;top:263px;width:71px;height:21px"></div>
<div class="val" style="left:1827px;top:265px;width:66px">1.91</div>
<div class="lab" style="left:1640px;top:295px;width:178px">260 / 230</div>
<div class="box" style="left:1827px;top:293px;width:71px;height:21px"></div>
<div class="val" style="left:1827px;top:295px;width:66px">2.12</div>

<div class="cb on" style="left:1670px;top:330px"></div>
<svg class="a" style="left:1670px;top:330px" width="13" height="13" viewBox="0 0 13 13"><path d="M3.3 6.6 L5.5 8.8 L9.8 4.5" fill="none" stroke="#fff" stroke-width="1"/></svg>
<div class="t" style="left:1690px;top:329px;font-size:14.6px">Baseline correction</div>
<div class="a" style="left:1828px;top:325px;width:42px;height:23px;background:#fff;border-bottom:1px solid #9a9a9a"></div>
<div class="t" style="left:1837px;top:329px;font-size:14.3px;color:#111">340</div>
<div class="t" style="left:1876px;top:329px;font-size:14.3px">nm</div>

<!-- table box -->
<div class="a" style="left:464px;top:776px;width:1453px;height:228px;border-top:1px solid #000;border-left:1px solid #000;border-right:1px solid #000;border-bottom:1px solid #000;background:#ececf8"></div>
<div style="position:absolute;left:465px;top:777px;width:1118px;height:24px;background:#fff"></div>
<div class="th" style="left:474px;top:782px">#</div>
<div style="position:absolute;left:506px;top:778px;width:1px;height:23px;background:#e5e5e5"></div>
<div class="th" style="left:514px;top:782px">Sample ID</div>
<div style="position:absolute;left:607px;top:778px;width:1px;height:23px;background:#e5e5e5"></div>
<div class="th" style="left:615px;top:782px">User name</div>
<div style="position:absolute;left:712px;top:778px;width:1px;height:23px;background:#e5e5e5"></div>
<div class="th" style="left:720px;top:782px">Date and Time</div>
<div style="position:absolute;left:840px;top:778px;width:1px;height:23px;background:#e5e5e5"></div>
<div class="th" style="left:848px;top:782px">Nucleic Acid</div>
<div style="position:absolute;left:952px;top:778px;width:1px;height:23px;background:#e5e5e5"></div>
<div class="th" style="left:960px;top:782px">Unit</div>
<div style="position:absolute;left:1010px;top:778px;width:1px;height:23px;background:#e5e5e5"></div>
<div class="th" style="left:1018px;top:782px">A260 (Abs)</div>
<div style="position:absolute;left:1115px;top:778px;width:1px;height:23px;background:#e5e5e5"></div>
<div class="th" style="left:1123px;top:782px">A280 (Abs)</div>
<div style="position:absolute;left:1220px;top:778px;width:1px;height:23px;background:#e5e5e5"></div>
<div class="th" style="left:1228px;top:782px">260/280</div>
<div style="position:absolute;left:1305px;top:778px;width:1px;height:23px;background:#e5e5e5"></div>
<div class="th" style="left:1313px;top:782px">260/230</div>
<div style="position:absolute;left:1390px;top:778px;width:1px;height:23px;background:#e5e5e5"></div>
<div class="th" style="left:1398px;top:782px">Sample Type</div>
<div style="position:absolute;left:1508px;top:778px;width:1px;height:23px;background:#e5e5e5"></div>
<div class="th" style="left:1516px;top:782px">Factor</div>
<div style="position:absolute;left:465px;top:801px;width:1118px;height:21px;background:#fff"></div>
<div class="td" style="left:469px;top:804.5px;color:#000">2</div>
<div class="td" style="left:510px;top:804.5px;color:#000">A01 02</div>
<div class="td" style="left:611px;top:804.5px;color:#000">TP-SSV</div>
<div class="td" style="left:716px;top:804.5px;color:#000">19.11.2024 09:17</div>
<div class="td" style="left:844px;top:804.5px;color:#000">-0.2</div>
<div class="td" style="left:956px;top:804.5px;color:#000">ng/µl</div>
<div class="td" style="left:1014px;top:804.5px;color:#000">-0.005</div>
<div class="td" style="left:1119px;top:804.5px;color:#000">-0.025</div>
<div class="td" style="left:1224px;top:804.5px;color:#000">0.19</div>
<div class="td" style="left:1309px;top:804.5px;color:#000">0.13</div>
<div class="td" style="left:1394px;top:804.5px;color:#000">DNA</div>
<div class="td" style="left:1512px;top:804.5px;color:#000">50.00</div>
<div style="position:absolute;left:465px;top:822px;width:1118px;height:21px;background:#fff"></div>
<div class="td" style="left:469px;top:825.5px;color:#000">3</div>
<div class="td" style="left:510px;top:825.5px;color:#000">A01</div>
<div class="td" style="left:611px;top:825.5px;color:#000">TP-SSV</div>
<div class="td" style="left:716px;top:825.5px;color:#000">19.11.2024 09:19</div>
<div class="td" style="left:844px;top:825.5px;color:#000">185.5</div>
<div class="td" style="left:956px;top:825.5px;color:#000">ng/µl</div>
<div class="td" style="left:1014px;top:825.5px;color:#000">3.709</div>
<div class="td" style="left:1119px;top:825.5px;color:#000">1.928</div>
<div class="td" style="left:1224px;top:825.5px;color:#000">1.92</div>
<div class="td" style="left:1309px;top:825.5px;color:#000">2.36</div>
<div class="td" style="left:1394px;top:825.5px;color:#000">DNA</div>
<div class="td" style="left:1512px;top:825.5px;color:#000">50.00</div>
<div style="position:absolute;left:465px;top:843px;width:1118px;height:21px;background:#fff"></div>
<div class="td" style="left:469px;top:846.5px;color:#000">4</div>
<div class="td" style="left:510px;top:846.5px;color:#000">A02</div>
<div class="td" style="left:611px;top:846.5px;color:#000">TP-SSV</div>
<div class="td" style="left:716px;top:846.5px;color:#000">19.11.2024 09:20</div>
<div class="td" style="left:844px;top:846.5px;color:#000">285.3</div>
<div class="td" style="left:956px;top:846.5px;color:#000">ng/µl</div>
<div class="td" style="left:1014px;top:846.5px;color:#000">5.707</div>
<div class="td" style="left:1119px;top:846.5px;color:#000">2.969</div>
<div class="td" style="left:1224px;top:846.5px;color:#000">1.92</div>
<div class="td" style="left:1309px;top:846.5px;color:#000">2.26</div>
<div class="td" style="left:1394px;top:846.5px;color:#000">DNA</div>
<div class="td" style="left:1512px;top:846.5px;color:#000">50.00</div>
<div style="position:absolute;left:465px;top:864px;width:1118px;height:21px;background:#fff"></div>
<div class="td" style="left:469px;top:867.5px;color:#000">5</div>
<div class="td" style="left:510px;top:867.5px;color:#000">A04</div>
<div class="td" style="left:611px;top:867.5px;color:#000">TP-SSV</div>
<div class="td" style="left:716px;top:867.5px;color:#000">19.11.2024 09:26</div>
<div class="td" style="left:844px;top:867.5px;color:#000">237.4</div>
<div class="td" style="left:956px;top:867.5px;color:#000">ng/µl</div>
<div class="td" style="left:1014px;top:867.5px;color:#000">4.747</div>
<div class="td" style="left:1119px;top:867.5px;color:#000">2.480</div>
<div class="td" style="left:1224px;top:867.5px;color:#000">1.91</div>
<div class="td" style="left:1309px;top:867.5px;color:#000">2.32</div>
<div class="td" style="left:1394px;top:867.5px;color:#000">DNA</div>
<div class="td" style="left:1512px;top:867.5px;color:#000">50.00</div>
<div style="position:absolute;left:465px;top:885px;width:1118px;height:21px;background:#fff"></div>
<div class="td" style="left:469px;top:888.5px;color:#000">6</div>
<div class="td" style="left:510px;top:888.5px;color:#000">A03</div>
<div class="td" style="left:611px;top:888.5px;color:#000">TP-SSV</div>
<div class="td" style="left:716px;top:888.5px;color:#000">19.11.2024 09:27</div>
<div class="td" style="left:844px;top:888.5px;color:#000">421.1</div>
<div class="td" style="left:956px;top:888.5px;color:#000">ng/µl</div>
<div class="td" style="left:1014px;top:888.5px;color:#000">8.423</div>
<div class="td" style="left:1119px;top:888.5px;color:#000">4.398</div>
<div class="td" style="left:1224px;top:888.5px;color:#000">1.92</div>
<div class="td" style="left:1309px;top:888.5px;color:#000">2.29</div>
<div class="td" style="left:1394px;top:888.5px;color:#000">DNA</div>
<div class="td" style="left:1512px;top:888.5px;color:#000">50.00</div>
<div style="position:absolute;left:465px;top:906px;width:1118px;height:21px;background:#fff"></div>
<div class="td" style="left:469px;top:909.5px;color:#000">7</div>
<div class="td" style="left:510px;top:909.5px;color:#000">A14</div>
<div class="td" style="left:611px;top:909.5px;color:#000">TP-SSV</div>
<div class="td" style="left:716px;top:909.5px;color:#000">19.11.2024 09:31</div>
<div class="td" style="left:844px;top:909.5px;color:#000">156.1</div>
<div class="td" style="left:956px;top:909.5px;color:#000">ng/µl</div>
<div class="td" style="left:1014px;top:909.5px;color:#000">3.122</div>
<div class="td" style="left:1119px;top:909.5px;color:#000">1.610</div>
<div class="td" style="left:1224px;top:909.5px;color:#000">1.94</div>
<div class="td" style="left:1309px;top:909.5px;color:#000">2.32</div>
<div class="td" style="left:1394px;top:909.5px;color:#000">DNA</div>
<div class="td" style="left:1512px;top:909.5px;color:#000">50.00</div>
<div style="position:absolute;left:465px;top:927px;width:1118px;height:21px;background:#fff"></div>
<div class="td" style="left:469px;top:930.5px;color:#000">8</div>
<div class="td" style="left:510px;top:930.5px;color:#000">A13</div>
<div class="td" style="left:611px;top:930.5px;color:#000">TP-SSV</div>
<div class="td" style="left:716px;top:930.5px;color:#000">19.11.2024 09:32</div>
<div class="td" style="left:844px;top:930.5px;color:#000">305.4</div>
<div class="td" style="left:956px;top:930.5px;color:#000">ng/µl</div>
<div class="td" style="left:1014px;top:930.5px;color:#000">6.108</div>
<div class="td" style="left:1119px;top:930.5px;color:#000">3.181</div>
<div class="td" style="left:1224px;top:930.5px;color:#000">1.92</div>
<div class="td" style="left:1309px;top:930.5px;color:#000">2.29</div>
<div class="td" style="left:1394px;top:930.5px;color:#000">DNA</div>
<div class="td" style="left:1512px;top:930.5px;color:#000">50.00</div>
<div style="position:absolute;left:465px;top:948px;width:1118px;height:21px;background:#fff"></div>
<div class="td" style="left:469px;top:951.5px;color:#000">9</div>
<div class="td" style="left:510px;top:951.5px;color:#000">A09</div>
<div class="td" style="left:611px;top:951.5px;color:#000">TP-SSV</div>
<div class="td" style="left:716px;top:951.5px;color:#000">19.11.2024 09:36</div>
<div class="td" style="left:844px;top:951.5px;color:#000">389.1</div>
<div class="td" style="left:956px;top:951.5px;color:#000">ng/µl</div>
<div class="td" style="left:1014px;top:951.5px;color:#000">7.782</div>
<div class="td" style="left:1119px;top:951.5px;color:#000">4.057</div>
<div class="td" style="left:1224px;top:951.5px;color:#000">1.92</div>
<div class="td" style="left:1309px;top:951.5px;color:#000">2.28</div>
<div class="td" style="left:1394px;top:951.5px;color:#000">DNA</div>
<div class="td" style="left:1512px;top:951.5px;color:#000">50.00</div>
<div style="position:absolute;left:465px;top:969px;width:1118px;height:21px;background:#0078d7"></div>
<div class="td" style="left:469px;top:972.5px;color:#fff">10</div>
<div class="td" style="left:510px;top:972.5px;color:#fff">A10</div>
<div class="td" style="left:611px;top:972.5px;color:#fff">TP-SSV</div>
<div class="td" style="left:716px;top:972.5px;color:#fff">19.11.2024 09:37</div>
<div class="td" style="left:844px;top:972.5px;color:#fff">182.2</div>
<div class="td" style="left:956px;top:972.5px;color:#fff">ng/µl</div>
<div class="td" style="left:1014px;top:972.5px;color:#fff">3.645</div>
<div class="td" style="left:1119px;top:972.5px;color:#fff">1.905</div>
<div class="td" style="left:1224px;top:972.5px;color:#fff">1.91</div>
<div class="td" style="left:1309px;top:972.5px;color:#fff">2.12</div>
<div class="td" style="left:1394px;top:972.5px;color:#fff">DNA</div>
<div class="td" style="left:1512px;top:972.5px;color:#fff">50.00</div>
<div style="position:absolute;left:465px;top:801px;width:1119px;height:1px;background:#a0a0a0"></div>
<div style="position:absolute;left:465px;top:822px;width:1119px;height:1px;background:#a0a0a0"></div>
<div style="position:absolute;left:465px;top:843px;width:1119px;height:1px;background:#a0a0a0"></div>
<div style="position:absolute;left:465px;top:864px;width:1119px;height:1px;background:#a0a0a0"></div>
<div style="position:absolute;left:465px;top:885px;width:1119px;height:1px;background:#a0a0a0"></div>
<div style="position:absolute;left:465px;top:906px;width:1119px;height:1px;background:#a0a0a0"></div>
<div style="position:absolute;left:465px;top:927px;width:1119px;height:1px;background:#a0a0a0"></div>
<div style="position:absolute;left:465px;top:948px;width:1119px;height:1px;background:#a0a0a0"></div>
<div style="position:absolute;left:465px;top:969px;width:1119px;height:1px;background:#a0a0a0"></div>
<div style="position:absolute;left:465px;top:990px;width:1119px;height:1px;background:#a0a0a0"></div>
<div style="position:absolute;left:506px;top:801px;width:1px;height:189px;background:#a0a0a0"></div>
<div style="position:absolute;left:607px;top:801px;width:1px;height:189px;background:#a0a0a0"></div>
<div style="position:absolute;left:712px;top:801px;width:1px;height:189px;background:#a0a0a0"></div>
<div style="position:absolute;left:840px;top:801px;width:1px;height:189px;background:#a0a0a0"></div>
<div style="position:absolute;left:952px;top:801px;width:1px;height:189px;background:#a0a0a0"></div>
<div style="position:absolute;left:1010px;top:801px;width:1px;height:189px;background:#a0a0a0"></div>
<div style="position:absolute;left:1115px;top:801px;width:1px;height:189px;background:#a0a0a0"></div>
<div style="position:absolute;left:1220px;top:801px;width:1px;height:189px;background:#a0a0a0"></div>
<div style="position:absolute;left:1305px;top:801px;width:1px;height:189px;background:#a0a0a0"></div>
<div style="position:absolute;left:1390px;top:801px;width:1px;height:189px;background:#a0a0a0"></div>
<div style="position:absolute;left:1508px;top:801px;width:1px;height:189px;background:#a0a0a0"></div>
<div style="position:absolute;left:1583px;top:801px;width:1px;height:189px;background:#a0a0a0"></div>
<!-- table vertical scrollbar -->
<div class="a" style="left:1899px;top:777px;width:1px;height:226px;background:#fbfbfe"></div>
<div class="a" style="left:1900px;top:777px;width:15px;height:226px;background:#efefef"></div>
<div class="a" style="left:1907px;top:803px;width:2px;height:182px;background:#858585;border-radius:1px"></div>

<!-- status bar -->
<div class="a" style="left:0;top:1010px;width:1920px;height:23px;background:#f0f0f0"></div>
<svg class="a" style="left:51px;top:1012px" width="17" height="18" viewBox="0 0 17 18">
  <defs><linearGradient id="sh" x1="0" y1="0" x2="1" y2="1"><stop offset="0" stop-color="#a8b8b0"/><stop offset="0.5" stop-color="#2f9a5e"/><stop offset="1" stop-color="#6fcf8a"/></linearGradient></defs>
  <path d="M6 2.8 Q8.5 1.5 11 2.8 L15.5 4.5 L15.5 10 Q15 14.5 8.5 17 Q2 14.5 1.5 10 L1.5 4.5 Z" fill="url(#sh)" stroke="#4a5a52" stroke-width="0.9"/>
  <path d="M5 9.8 L7.6 12 L12.2 6.8" fill="none" stroke="#e6fff0" stroke-width="1.6"/>
</svg>
<div class="t" style="left:1865px;top:1016px;font-size:11px;letter-spacing:-0.2px">TP-SSV</div>

<!-- taskbar -->
<div class="a" style="left:0;top:1032px;width:1920px;height:1px;background:#c9d0da"></div>
<div class="a" style="left:0;top:1033px;width:1920px;height:47px;background:linear-gradient(90deg,#e3ecf8 0%,#e0e9f7 20%,#dce5f5 45%,#d9e0f3 60%,#d6dcf0 72%,#e0e8f6 85%,#e4ecf8 100%)"></div>
<svg class="a" style="left:12px;top:1038px" width="36" height="34" viewBox="12 1038 36 34">
  <defs>
    <linearGradient id="cl" x1="0" y1="0" x2="0" y2="1"><stop offset="0" stop-color="#9fb8ec"/><stop offset="0.5" stop-color="#cfdcf6"/><stop offset="1" stop-color="#bccbea"/></linearGradient>
    <linearGradient id="dr" x1="0" y1="0" x2="1" y2="1"><stop offset="0" stop-color="#5aa8f4"/><stop offset="1" stop-color="#0a5ee8"/></linearGradient>
  </defs>
  <path d="M21.5 1060.8 Q19 1060.5 19.2 1057 Q19.5 1052.5 24 1052.3 Q25.5 1046 30 1046 Q34.5 1046 35.5 1050.8 Q38 1050 40.5 1051.5 Q42.8 1053 42.6 1056.5 Q42.3 1060.6 39 1060.8 Z" fill="url(#cl)" stroke="#8ea4d2" stroke-width="0.6"/>
  <path d="M32.2 1055.9 L38.5 1061 Q39.5 1062.5 38.8 1064.3 Q37.8 1067 35.3 1067 Q32 1067 32 1063.8 Z" fill="url(#dr)"/>
</svg>
<div class="t" style="left:50px;top:1043px;font-size:11.5px;color:#222">6°C</div>
<div class="t" style="left:50px;top:1058px;font-size:12.5px;color:#333">Light rain</div>

<!-- start -->
<svg class="a" style="left:705px;top:1045px" width="23" height="23" viewBox="0 0 23 23">
  <defs><linearGradient id="ws" x1="0" y1="0" x2="1" y2="1"><stop offset="0" stop-color="#39c4f3"/><stop offset="1" stop-color="#0a78d6"/></linearGradient></defs>
  <rect x="0" y="0" width="10.8" height="10.8" fill="url(#ws)"/><rect x="12.2" y="0" width="10.8" height="10.8" fill="url(#ws)"/>
  <rect x="0" y="12.2" width="10.8" height="10.8" fill="url(#ws)"/><rect x="12.2" y="12.2" width="10.8" height="10.8" fill="url(#ws)"/>
</svg>
<!-- search -->
<div class="a" style="left:742px;top:1040px;width:219px;height:32px;border-radius:16px;background:#f3f6fb;border:1px solid #d3dae4"></div>
<svg class="a" style="left:752px;top:1047px" width="17" height="17" viewBox="0 0 17 17"><circle cx="7" cy="7" r="5.5" fill="none" stroke="#1a1a1a" stroke-width="1.6"/><path d="M11 11 L15.5 15.5" stroke="#1a1a1a" stroke-width="1.8"/></svg>
<div class="t" style="left:778px;top:1050px;font-size:13.5px;color:#5a5a5a">Search</div>
<svg class="a" style="left:905px;top:1040px" width="56" height="32" viewBox="905 1040 56 32">
  <defs><linearGradient id="mn" x1="0" y1="0" x2="0" y2="1"><stop offset="0" stop-color="#a9a6b4"/><stop offset="1" stop-color="#6f6c7c"/></linearGradient></defs>
  <path d="M913 1068 Q911.5 1061 913.5 1055 Q915 1059 916 1056 Q917.5 1062 917 1068 Z" fill="#9ad23a"/>
  <path d="M918 1054 Q920 1046 930 1045.5 Q940 1045 946 1052 Q950 1057 953 1060 Q954 1064 950 1063 Q947 1061 944 1061 Q938 1064 930 1063 Q926 1065 922 1064 Q924 1061 921 1060 Q917 1058 918 1054 Z" fill="url(#mn)"/>
  <ellipse cx="922" cy="1053" rx="4" ry="3.3" fill="#b3b0be"/>
  <circle cx="921.5" cy="1051.5" r="0.6" fill="#333"/>
</svg>
<!-- task view -->
<svg class="a" style="left:972px;top:1043px" width="26" height="26" viewBox="972 1043 26 26">
  <defs>
    <linearGradient id="tv1" x1="0" y1="0" x2="1" y2="1"><stop offset="0" stop-color="#ffffff"/><stop offset="1" stop-color="#d8d8d8"/></linearGradient>
    <linearGradient id="tv2" x1="0" y1="0" x2="1" y2="1"><stop offset="0" stop-color="#2a2a2a"/><stop offset="1" stop-color="#101010"/></linearGradient>
  </defs>
  <rect x="979" y="1044.5" width="17.5" height="15" rx="1.5" fill="url(#tv1)"/>
  <rect x="973.3" y="1051" width="17.5" height="16" rx="1" fill="url(#tv2)"/>
  <rect x="979" y="1051" width="11.8" height="8.5" fill="#a8a8a8"/>
</svg>
<!-- edge -->
<svg class="a" style="left:1059px;top:1042px" width="28" height="28" viewBox="1059 1042 28 28">
  <defs>
    <linearGradient id="eg1" x1="0" y1="1" x2="1" y2="0"><stop offset="0" stop-color="#1565c8"/><stop offset="0.5" stop-color="#1aa3e6"/><stop offset="1" stop-color="#52dc6a"/></linearGradient>
  </defs>
  <circle cx="1073" cy="1055.8" r="12.3" fill="url(#eg1)"/>
  <path d="M1061 1057 Q1063 1068.5 1074 1068.2 Q1081 1068 1084.5 1063 Q1080 1065.5 1075 1064 Q1067 1061 1068 1055 Q1063 1053 1061 1057 Z" fill="#0d52a8"/>
  <path d="M1069 1057.5 Q1069 1051.5 1074.5 1051.5 Q1079 1051.5 1079.5 1056 Q1079.8 1059.5 1076.5 1060.5 Q1072 1061.5 1069 1057.5 Z" fill="#d9e3f4"/>
  <path d="M1076.5 1060.5 Q1081 1060 1085 1057 Q1084 1062 1081 1064 Q1078 1062.5 1076.5 1060.5 Z" fill="#2bb0d8"/>
</svg>
<!-- explorer -->
<svg class="a" style="left:1103px;top:1044px" width="27" height="24" viewBox="0 0 27 24">
  <path d="M1 3 Q1 1 3 1 L10 1 L12 3 L24 3 Q26 3 26 5 L26 21 Q26 23 24 23 L3 23 Q1 23 1 21 Z" fill="#f2b300"/>
  <rect x="1" y="7" width="25" height="16" rx="2" fill="#ffd95a"/>
  <rect x="8" y="16" width="11" height="5" rx="1" fill="#1f78c9"/>
</svg>
<div class="a" style="left:1114px;top:1073px;width:6px;height:2px;border-radius:1px;background:#6b6b6b"></div>
<!-- nucleic acid app active -->
<div class="a" style="left:1142px;top:1037px;width:38px;height:39px;border-radius:5px;background:#eef2fc;box-shadow:0 0 0 0.5px #dfe4f0"></div>
<svg class="a" style="left:1149px;top:1044px" width="24" height="24" viewBox="1149 1044 24 24">
  <defs><linearGradient id="tbi" x1="0" y1="0" x2="1" y2="0"><stop offset="0" stop-color="#dfe8f8"/><stop offset="0.5" stop-color="#8ea6d8"/><stop offset="1" stop-color="#6a88c8"/></linearGradient></defs>
  <rect x="1149" y="1044" width="24" height="23.7" fill="url(#tbi)"/>
  <rect x="1151" y="1045" width="20" height="5.8" rx="2.8" fill="#050505"/>
  <path d="M1155 1050.8 L1165.5 1050.8 Q1163.5 1055 1165.5 1059.5 L1155 1059.5 Q1157 1055 1155 1050.8 Z" fill="#26307a"/>
  <ellipse cx="1160.5" cy="1055.6" rx="2.2" ry="1" fill="#b0c0f4"/>
  <rect x="1149.8" y="1060" width="20.8" height="6" rx="2.8" fill="#050505"/>
</svg>
<div class="a" style="left:1153px;top:1072px;width:16px;height:3px;border-radius:1.5px;background:#0a6fd0"></div>
<!-- paint -->
<svg class="a" style="left:1192px;top:1043px" width="26" height="26" viewBox="1192 1043 26 26">
  <defs><linearGradient id="pg" x1="0" y1="0" x2="1" y2="1"><stop offset="0" stop-color="#5ccaf2"/><stop offset="1" stop-color="#1f86d8"/></linearGradient></defs>
  <path d="M1204 1044.6 Q1216 1044.6 1216 1054 Q1216 1058.5 1211.5 1058 Q1208.5 1057.8 1208.8 1061 Q1209.5 1067.5 1203.5 1067.5 Q1193.6 1067.5 1193.6 1056 Q1193.6 1044.6 1204 1044.6 Z" fill="url(#pg)"/>
  <circle cx="1197.6" cy="1056.6" r="1.5" fill="#d8553a"/>
  <circle cx="1200.6" cy="1051.4" r="1.5" fill="#3fae4a"/>
  <circle cx="1205.6" cy="1049.3" r="1.5" fill="#f2c230"/>
  <path d="M1205 1056 v3 M1203.5 1057.5 h3" stroke="#fff" stroke-width="0.9"/>
  <rect x="1209.5" y="1053.5" width="3.2" height="14" fill="#8a5a2a"/>
  <rect x="1209" y="1051" width="4.2" height="3" fill="#e8e4dc"/>
</svg>
<div class="a" style="left:1202px;top:1073px;width:6px;height:2px;border-radius:1px;background:#6b6b6b"></div>

<!-- tray -->
<svg class="a" style="left:1689px;top:1051px" width="12" height="8" viewBox="0 0 12 8"><path d="M1 6.5 L6 1.5 L11 6.5" fill="none" stroke="#222" stroke-width="1.3"/></svg>
<div class="t" style="left:1721px;top:1052px;font-size:11.5px;color:#222">ENG</div>
<svg class="a" style="left:1762px;top:1047px" width="18" height="17" viewBox="0 0 18 17">
  <path d="M1 2 L12 2 M1 2 L1 12 L12 12" fill="none" stroke="#222" stroke-width="1.2"/>
  <rect x="11.5" y="1" width="4" height="6" rx="1.5" fill="none" stroke="#222" stroke-width="1.1"/>
  <path d="M13.5 7 L13.5 16 M4 15.5 L13 15.5 M7 12 L7 15" fill="none" stroke="#222" stroke-width="1.2"/>
</svg>
<svg class="a" style="left:1786px;top:1048px" width="18" height="16" viewBox="0 0 18 16">
  <path d="M1 5.5 L4 5.5 L8 2 L8 14 L4 10.5 L1 10.5 Z" fill="none" stroke="#222" stroke-width="1.1"/>
  <path d="M10.5 6 Q12 8 10.5 10 M12.5 4 Q15 8 12.5 12 M14.5 2 Q18 8 14.5 14" fill="none" stroke="#222" stroke-width="1.1"/>
</svg>
<div class="t" style="left:1848px;top:1043px;font-size:11.5px;color:#222">09:37</div>
<div class="t" style="left:1819px;top:1059px;font-size:11.5px;color:#222">19.11.2024</div>
<svg class="a" style="left:1884px;top:1049px" width="15" height="16" viewBox="0 0 15 16">
  <path d="M7.5 1 Q12.5 1 12.5 7 L12.5 10 L14 12.5 L1 12.5 L2.5 10 L2.5 7 Q2.5 1 7.5 1 Z" fill="#0a3a9a"/>
  <path d="M5.5 13.5 Q7.5 16 9.5 13.5 Z" fill="#0a3a9a"/>
</svg>
</body></html>
